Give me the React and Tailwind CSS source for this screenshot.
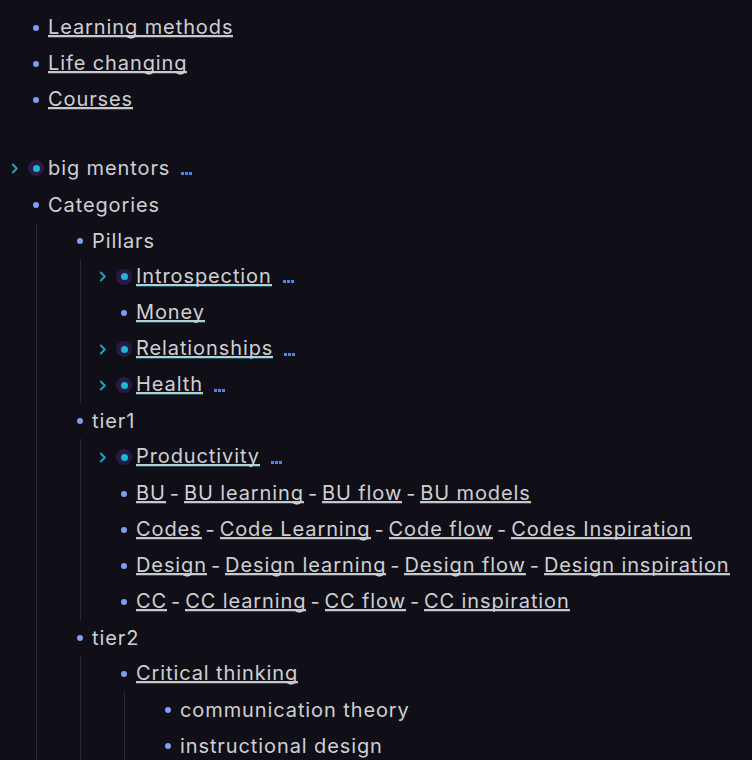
import React from 'react';

const Chevron = () => (
  <svg width="8" height="11" viewBox="0 0 8 11" className="block">
    <path d="M1.8 1.5 L5.8 5.5 L1.8 9.5" fill="none" stroke="#1ea8c8" strokeWidth="1.8" strokeLinecap="round" strokeLinejoin="round" />
  </svg>
);

const Ellipsis = () => (
  <span className="ml-[11px] flex gap-[1px] translate-y-[5px]">
    <span className="w-[3px] h-[3px] bg-[#4a86f0]" />
    <span className="w-[3px] h-[3px] bg-[#4a86f0]" />
    <span className="w-[3px] h-[3px] bg-[#4a86f0]" />
  </span>
);

const L = ({ children }) => (
  <span className="inline-block leading-[16px] border-b-2 border-[#c6c9cc] shadow-[0_1px_0_#15505d]">{children}</span>
);

const Sep = () => <span className="mx-[4px]">-</span>;

const Row = ({ children, collapsed }) => (
  <div className="flex items-center h-[36.125px]">
    <div className="w-[30px] shrink-0 flex justify-center">{collapsed && <Chevron />}</div>
    <div className="w-[12px] shrink-0 flex justify-center items-center">
      {collapsed ? (
        <span className="w-4 h-4 shrink-0 rounded-full bg-[#281a42] flex items-center justify-center">
          <span className="w-[7px] h-[7px] rounded-full bg-[#1cb6d6]" />
        </span>
      ) : (
        <span className="w-[6px] h-[6px] shrink-0 rounded-full bg-[#7b9ff2]" />
      )}
    </div>
    <div className="ml-[6px] flex items-center whitespace-nowrap">
      {children}
      {collapsed && <Ellipsis />}
    </div>
  </div>
);

const Kids = ({ children }) => (
  <div className="ml-[36px] border-l border-[#2a2a34] pl-[7px]">{children}</div>
);

export default function App() {
  return (
    <div
      className="w-[752px] h-[760px] overflow-hidden bg-[#100f18] text-[#cfd0d2] text-[20px] tracking-[0.9px] pt-[10px]"
      style={{ fontFamily: 'Inter, "Noto Sans", sans-serif' }}
    >
      <Row><L>Learning methods</L></Row>
      <Row><L>Life changing</L></Row>
      <Row><L>Courses</L></Row>
      <div className="h-[32px]" />
      <Row collapsed>big mentors</Row>
      <Row>Categories</Row>
      <Kids>
        <Row>Pillars</Row>
        <Kids>
          <Row collapsed><L>Introspection</L></Row>
          <Row><L>Money</L></Row>
          <Row collapsed><L>Relationships</L></Row>
          <Row collapsed><L>Health</L></Row>
        </Kids>
        <Row>tier1</Row>
        <Kids>
          <Row collapsed><L>Productivity</L></Row>
          <Row><L>BU</L><Sep /><L>BU learning</L><Sep /><L>BU flow</L><Sep /><L>BU models</L></Row>
          <Row><L>Codes</L><Sep /><L>Code Learning</L><Sep /><L>Code flow</L><Sep /><L>Codes Inspiration</L></Row>
          <Row><L>Design</L><Sep /><L>Design learning</L><Sep /><L>Design flow</L><Sep /><L>Design inspiration</L></Row>
          <Row><L>CC</L><Sep /><L>CC learning</L><Sep /><L>CC flow</L><Sep /><L>CC inspiration</L></Row>
        </Kids>
        <Row>tier2</Row>
        <Kids>
          <Row><L>Critical thinking</L></Row>
          <Kids>
            <Row>communication theory</Row>
            <Row>instructional design</Row>
          </Kids>
        </Kids>
      </Kids>
    </div>
  );
}
